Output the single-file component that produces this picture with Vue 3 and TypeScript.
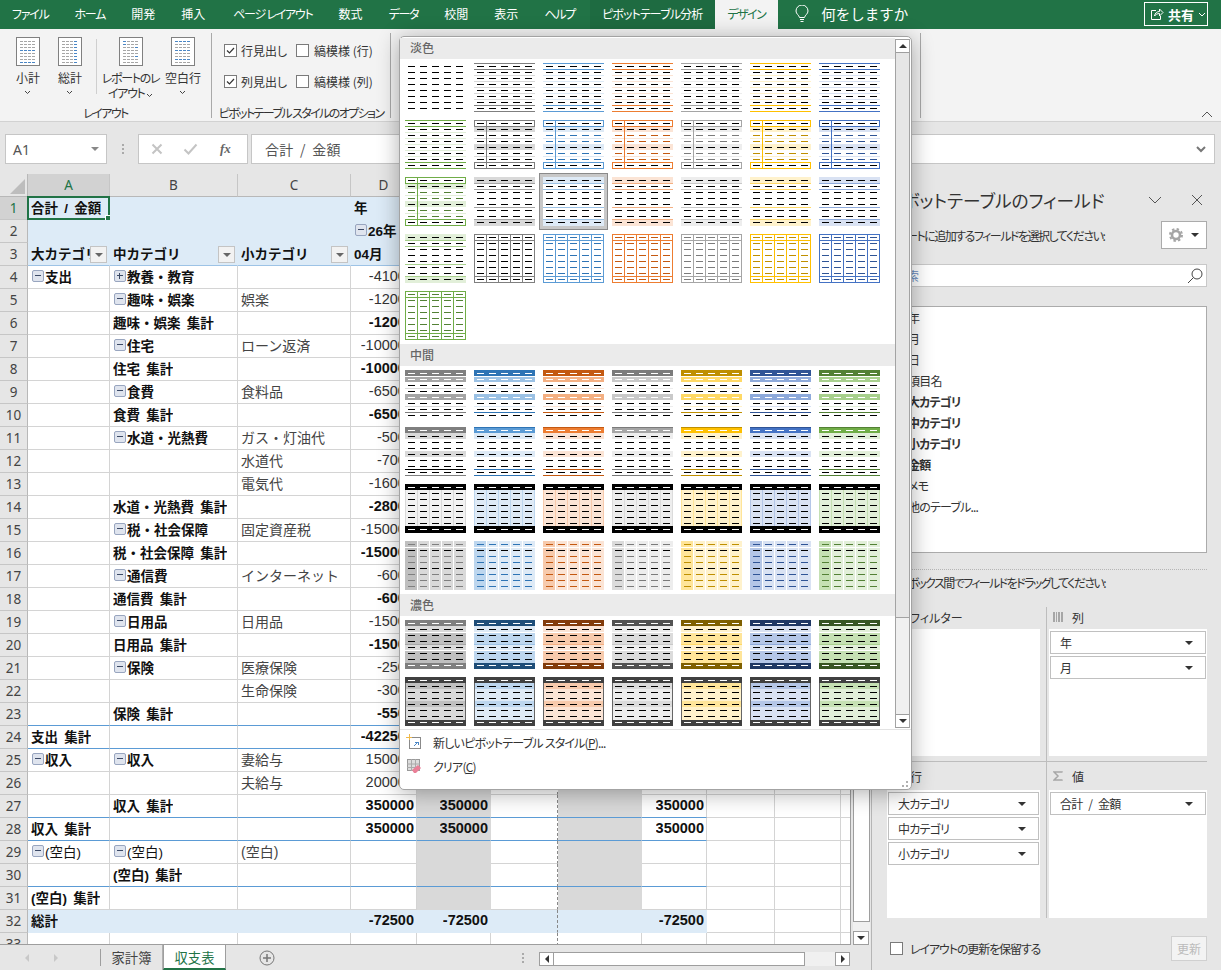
<script setup lang="ts">
interface Shape {
  x: number
  y: number
  w: number
  h: number
  c: string
}

interface Row {
  n: number
  a?: string
  b?: string
  c?: string
  d?: string
  e?: string
  h?: string
  exA?: string
  exB?: string
  bold?: boolean
  plain?: boolean
  head?: boolean
  total?: boolean
  blue?: boolean
  filters?: boolean
}

const tabs = [
  { label: 'ファイル', cls: 'kana' },
  { label: 'ホーム', cls: 'kana' },
  { label: '開発', cls: '' },
  { label: '挿入', cls: '' },
  { label: 'ページ レイアウト', cls: 'kana page-layout' },
  { label: '数式', cls: '' },
  { label: 'データ', cls: 'kana' },
  { label: '校閲', cls: '' },
  { label: '表示', cls: '' },
  { label: 'ヘルプ', cls: 'kana' },
  { label: 'ピボットテーブル分析', cls: 'analysis' },
  { label: 'デザイン', cls: 'active' },
]

const columns = ['A', 'B', 'C', 'D', 'E', 'F', 'G', 'H', 'I', 'J', '']

const rows: Row[] = [
  { n: 1, a: '合計 / 金額', d: '年', head: true, bold: true },
  { n: 2, d: '26年', head: true, bold: true },
  { n: 3, a: '大カテゴリ', b: '中カテゴリ', c: '小カテゴリ', d: '04月', head: true, bold: true, filters: true },
  { n: 4, a: '支出', exA: '-', b: '教養・教育', exB: '+', d: '-41000' },
  { n: 5, b: '趣味・娯楽', exB: '-', c: '娯楽', d: '-12000' },
  { n: 6, b: '趣味・娯楽 集計', d: '-12000', bold: true },
  { n: 7, b: '住宅', exB: '-', c: 'ローン返済', d: '-100000' },
  { n: 8, b: '住宅 集計', d: '-100000', bold: true },
  { n: 9, b: '食費', exB: '-', c: '食料品', d: '-65000' },
  { n: 10, b: '食費 集計', d: '-65000', bold: true },
  { n: 11, b: '水道・光熱費', exB: '-', c: 'ガス・灯油代', d: '-5000' },
  { n: 12, c: '水道代', d: '-7000' },
  { n: 13, c: '電気代', d: '-16000' },
  { n: 14, b: '水道・光熱費 集計', d: '-28000', bold: true },
  { n: 15, b: '税・社会保障', exB: '-', c: '固定資産税', d: '-150000' },
  { n: 16, b: '税・社会保障 集計', d: '-150000', bold: true },
  { n: 17, b: '通信費', exB: '-', c: 'インターネット', d: '-6000' },
  { n: 18, b: '通信費 集計', d: '-6000', bold: true },
  { n: 19, b: '日用品', exB: '-', c: '日用品', d: '-15000' },
  { n: 20, b: '日用品 集計', d: '-15000', bold: true },
  { n: 21, b: '保険', exB: '-', c: '医療保険', d: '-2500' },
  { n: 22, c: '生命保険', d: '-3000' },
  { n: 23, b: '保険 集計', d: '-5500', bold: true, blue: true },
  { n: 24, a: '支出 集計', d: '-422500', bold: true, blue: true },
  { n: 25, a: '収入', exA: '-', b: '収入', exB: '-', c: '妻給与', d: '150000' },
  { n: 26, c: '夫給与', d: '200000' },
  { n: 27, b: '収入 集計', d: '350000', e: '350000', h: '350000', bold: true, blue: true },
  { n: 28, a: '収入 集計', d: '350000', e: '350000', h: '350000', bold: true, blue: true },
  { n: 29, a: '(空白)', exA: '-', b: '(空白)', exB: '-', c: '(空白)', plain: true },
  { n: 30, b: '(空白) 集計', blue: true },
  { n: 31, a: '(空白) 集計' },
  { n: 32, a: '総計', d: '-72500', e: '-72500', h: '-72500', bold: true, total: true },
  { n: 33 },
]

function cellText(row: Row, col: string): string {
  if (col === 'A') return row.a ?? ''
  if (col === 'B') return row.b ?? ''
  if (col === 'C') return row.c ?? ''
  if (col === 'D') return row.d ?? ''
  if (col === 'E') return row.e ?? ''
  if (col === 'H') return row.h ?? ''
  return ''
}

function cellClass(row: Row, col: string) {
  const inPivot = 'ABCDEFGH'.includes(col) && col !== ''
  const isNum = 'DEH'.includes(col) && col !== '' && !row.head
  return {
    head: row.head && inPivot,
    'head-last': row.n === 3 && inPivot,
    total: row.total && inPivot,
    blue: row.blue && inPivot,
    num: isNum,
    strong: !(col === 'C' && !row.head) && !row.plain && (row.bold || col === 'A' || col === 'B'),
    sub: col === 'C' && !row.head,
    shaded: (col === 'E' || col === 'G') && row.n > 3 && row.n < 32,
    page: col === 'F',
  }
}

// テーブルスタイルのサムネイル
const base = ['#7f7f7f', '#5b9bd5', '#ed7d31', '#a5a5a5', '#ffc000', '#4472c4', '#70ad47']
const text = ['#000000', '#2e74b5', '#c45911', '#7b7b7b', '#bf8f00', '#2f5496', '#538135']
const deep = ['#7f7f7f', '#1f4e79', '#833c0b', '#525252', '#7f6000', '#1f3864', '#385623']
const tint = ['#d9d9d9', '#deeaf6', '#fbe4d5', '#ededed', '#fff2cc', '#d9e2f3', '#e2efd9']
const mid = ['#bfbfbf', '#bdd6ee', '#f7caac', '#dbdbdb', '#ffe599', '#b4c6e7', '#c5e0b3']
const strong = ['#a6a6a6', '#9cc2e5', '#f4b083', '#c9c9c9', '#ffd966', '#8eaadb', '#a8d08d']

const DASH_COLS = [3, 15, 27, 39, 51]
const DASH_ROWS = [3, 9, 15, 21, 27, 33, 39, 45]

function dashes(color: (r: number, c: number) => string): Shape[] {
  const out: Shape[] = []
  DASH_ROWS.forEach((y, r) => {
    DASH_COLS.forEach((x, c) => out.push({ x, y, w: 7, h: 1, c: color(r, c) }))
  })
  return out
}

function hline(y: number, c: string, h = 1): Shape {
  return { x: 0, y, w: 61, h, c }
}

function box(y: number, h: number, c: string): Shape[] {
  return [
    { x: 0, y, w: 61, h: 1, c },
    { x: 0, y: y + h - 1, w: 61, h: 1, c },
    { x: 0, y, w: 1, h, c },
    { x: 60, y, w: 1, h, c },
  ]
}

function vlines(c: string, y = 0, h = 49): Shape[] {
  return [12, 24, 36, 48].map((x) => ({ x, y, w: 1, h, c }))
}

const styles: Record<string, (t: number) => Shape[]> = {
  plain: () => dashes(() => '#000'),
  lined: (t) => [
    hline(0, base[t]),
    hline(6, base[t]),
    ...[12, 18, 24, 30, 36].map((y) => hline(y, tint[t])),
    hline(42, base[t]),
    hline(48, base[t]),
    ...dashes(() => '#000'),
  ],
  boxed: (t) => [
    hline(7, tint[t], 5),
    hline(24, tint[t], 6),
    hline(18, tint[t]),
    hline(36, tint[t]),
    ...box(0, 7, base[t]),
    ...box(42, 7, base[t]),
    { x: 12, y: 0, w: 1, h: 49, c: base[t] },
    ...dashes((r) => ([0, 1, 4, 7].includes(r) ? '#000' : text[t])),
  ],
  banded: (t) => [
    hline(0, tint[t], 6),
    hline(42, tint[t], 7),
    hline(6, strong[t]),
    hline(12, strong[t]),
    hline(30, strong[t]),
    hline(42, strong[t]),
    ...dashes(() => '#000'),
  ],
  grid: (t) => [
    ...box(0, 49, base[t]),
    hline(6, base[t]),
    hline(42, base[t]),
    ...vlines(base[t]),
    ...dashes(() => text[t]),
  ],
  medA: (t) => [
    hline(0, t === 0 ? '#7f7f7f' : text[t], 6),
    hline(7, strong[t], 5),
    hline(24, strong[t], 6),
    hline(18, tint[t]),
    hline(36, tint[t]),
    hline(42, text[t] === '#000000' ? '#7f7f7f' : text[t]),
    ...dashes((r) => ([0, 1, 4].includes(r) ? '#fff' : '#000')),
  ],
  medB: (t) => [
    hline(0, base[t], 6),
    hline(0, text[t] === '#000000' ? '#7f7f7f' : text[t]),
    hline(6, tint[t], 6),
    hline(24, tint[t], 6),
    hline(42, text[t]),
    hline(48, text[t] === '#000000' ? '#7f7f7f' : text[t]),
    ...dashes((r) => (r === 0 ? '#fff' : '#000')),
  ],
  medC: (t) => [
    hline(6, t === 0 ? '#f2f2f2' : tint[t], 36),
    ...vlines(t === 0 ? '#d9d9d9' : mid[t], 6, 36),
    { x: 0, y: 6, w: 1, h: 36, c: t === 0 ? '#d9d9d9' : mid[t] },
    { x: 60, y: 6, w: 1, h: 36, c: t === 0 ? '#d9d9d9' : mid[t] },
    hline(0, '#000', 6),
    hline(42, '#000', 7),
    ...dashes((r) => ([0, 7].includes(r) ? '#fff' : '#000')),
  ],
  medD: (t) => [
    hline(0, tint[t], 49),
    { x: 0, y: 0, w: 12, h: 49, c: mid[t] },
    ...vlines('#fff'),
    hline(6, '#fff'),
    ...dashes((r) => ([1, 4].includes(r) ? '#000' : t === 0 ? '#7f7f7f' : text[t])),
  ],
  darkA: (t) => [
    hline(0, t === 0 ? '#bfbfbf' : mid[t], 49),
    hline(6, tint[t], 6),
    hline(24, tint[t], 6),
    hline(24, strong[t]),
    hline(12, '#fff'),
    hline(30, '#fff'),
    hline(0, deep[t], 6),
    hline(43, deep[t], 6),
    ...dashes((r) => ([0, 7].includes(r) ? '#fff' : '#000')),
  ],
  darkB: (t) => [
    hline(0, t === 0 ? '#d9d9d9' : tint[t], 49),
    hline(6, mid[t], 6),
    hline(24, mid[t], 6),
    ...box(0, 49, '#666'),
    hline(0, '#404040', 6),
    hline(43, '#404040', 6),
    ...dashes((r) => ([0, 7].includes(r) ? '#fff' : '#000')),
  ],
}

function series(kind: string): Shape[][] {
  return base.map((_, t) => styles[kind](t))
}

const sections = [
  {
    title: '淡色',
    items: [[styles.plain(0)], series('lined'), series('boxed'), series('banded'), series('grid')].flat(),
  },
  {
    title: '中間',
    items: [series('medA'), series('medB'), series('medC'), series('medD')].flat(),
  },
  {
    title: '濃色',
    items: [series('darkA'), series('darkB')].flat(),
  },
]

const selectedSwatch = 16

// リボンのアイコン (グレーの罫線 + 青い強調)
const GRAY = '#a6a6a6'
const BLUE = '#4a86c5'

function ribbonIcon(blue: (r: number, c: number) => boolean): Shape[] {
  const out: Shape[] = []
  for (let r = 0; r < 8; r++) {
    for (let c = 0; c < 4; c++) {
      out.push({ x: 4 + c * 4, y: 4 + r * 3, w: 3, h: 1, c: blue(r, c) ? BLUE : GRAY })
    }
  }
  return out
}

const ribbonButtons = [
  { lines: ['小計'], icon: ribbonIcon((r) => r === 3 || r === 7), cls: 'b-sub' },
  { lines: ['総計'], icon: ribbonIcon((_, c) => c === 3), cls: 'b-total' },
  { lines: ['レポートのレ', 'イアウト'], icon: ribbonIcon((r, c) => (r < 2 && c === 0) || (c === 3 && r % 3 === 2)), cls: 'b-report' },
  { lines: ['空白行'], icon: ribbonIcon((r) => r === 0 || r === 3 || r === 6), cls: 'b-blank' },
]

const fieldNames = [
  { name: '年', bold: false },
  { name: '月', bold: false },
  { name: '日', bold: false },
  { name: '項目名', bold: false },
  { name: '大カテゴリ', bold: true },
  { name: '中カテゴリ', bold: true },
  { name: '小カテゴリ', bold: true },
  { name: '金額', bold: true },
  { name: 'メモ', bold: false },
  { name: '他のテーブル...', bold: false, link: true },
]

const areas = [
  { title: 'フィルター', icon: 'filter', items: [] as string[] },
  { title: '列', icon: 'cols', items: ['年', '月'] },
  { title: '行', icon: 'rows', items: ['大カテゴリ', '中カテゴリ', '小カテゴリ'] },
  { title: '値', icon: 'sum', items: ['合計 / 金額'] },
]
</script>

<template>
  <div class="excel">
    <header class="tabbar">
      <div v-for="tab in tabs" :key="tab.label" class="tab" :class="tab.cls">{{ tab.label }}</div>
      <div class="tell">
        <svg width="14" height="18" viewBox="0 0 14 18" fill="none" stroke="#fff">
          <path d="M4.5 12.5C4 10 1 9 1 6a6 6 0 0 1 12 0c0 3-3 4-3.500 6.500z" />
          <path d="M5 14.500h4M5.500 16.500h3" />
        </svg>
        <span>何をしますか</span>
      </div>
      <div class="share">
        <svg width="14" height="14" viewBox="0 0 14 14" fill="none" stroke="#fff">
          <path d="M6 3.500H1.500v9h9V9M4.500 9c.5-3 2.500-4.500 5-4.500V2l3.500 3.500L9.500 9V6.500C7.500 6.500 5.500 7.500 4.500 9z" />
        </svg>
        <b>共有</b>
        <svg width="8" height="5" viewBox="0 0 8 5" fill="none" stroke="#fff"><path d="M1 1l3 3 3-3" /></svg>
      </div>
    </header>

    <section class="ribbon">
      <div class="rgroup g-layout">
        <div class="rbody">
          <div v-for="btn in ribbonButtons" :key="btn.cls" class="rbtn" :class="btn.cls">
            <svg width="24" height="29" viewBox="0 0 24 29" class="rbtn-icon" shape-rendering="crispEdges">
              <rect x="0.500" y="0.500" width="23" height="28" fill="#fff" stroke="#808080" />
              <rect v-for="(s, i) in btn.icon" :key="i" :x="s.x" :y="s.y" :width="s.w" :height="s.h" :fill="s.c" />
            </svg>
            <div class="rbtn-text">
              <span v-for="(line, i) in btn.lines" :key="line" class="rbtn-line">
                {{ line }}
                <svg v-if="btn.lines.length > 1 && i === 1" width="7" height="5" viewBox="0 0 7 5" fill="none" stroke="#444"><path d="M1 1l2.500 2.500L6 1" /></svg>
              </span>
              <svg v-if="btn.lines.length === 1" width="7" height="5" viewBox="0 0 7 5" fill="none" stroke="#444" class="rbtn-chev"><path d="M1 1l2.500 2.500L6 1" /></svg>
            </div>
          </div>
        </div>
        <div class="rlabel">レイアウト</div>
      </div>
      <div class="rgroup g-options">
        <div class="checks">
          <label class="check"><span class="box on"><svg width="11" height="11" viewBox="0 0 11 11" fill="none" stroke="#333" stroke-width="1.200"><path d="M2 5.500l2.500 2.500L9 3" /></svg></span>行見出し</label>
          <label class="check"><span class="box"></span>縞模様 (行)</label>
          <label class="check"><span class="box on"><svg width="11" height="11" viewBox="0 0 11 11" fill="none" stroke="#333" stroke-width="1.200"><path d="M2 5.500l2.500 2.500L9 3" /></svg></span>列見出し</label>
          <label class="check"><span class="box"></span>縞模様 (列)</label>
        </div>
        <div class="rlabel">ピボットテーブル スタイルのオプション</div>
      </div>
      <div class="rgroup g-styles"></div>
      <svg class="collapse" width="12" height="7" viewBox="0 0 12 7" fill="none" stroke="#555"><path d="M1 6l5-5 5 5" /></svg>
    </section>

    <section class="formula">
      <div class="namebox">
        <span>A1</span>
        <i class="tri gray"></i>
      </div>
      <div class="grip"></div>
      <div class="fxbox">
        <svg width="12" height="12" viewBox="0 0 12 12" fill="none" stroke="#c4c4c4" stroke-width="2"><path d="M1.500 1.500l9 9M10.500 1.500l-9 9" /></svg>
        <svg width="15" height="12" viewBox="0 0 15 12" fill="none" stroke="#c4c4c4" stroke-width="2"><path d="M1.500 6.500l4 4 8-9" /></svg>
        <span class="fx">fx</span>
      </div>
      <div class="fbar">
        <span>合計 / 金額</span>
        <svg width="10" height="7" viewBox="0 0 10 7" fill="none" stroke="#777" stroke-width="2"><path d="M1 1l4 4 4-4" /></svg>
      </div>
    </section>

    <main class="workspace">
      <div class="book">
        <div class="book-top">
          <div class="sheet">
            <div class="cols col-head">
              <div class="corner"><i></i></div>
              <div v-for="col in columns" :key="col" class="chead" :class="{ sel: col === 'A' }">{{ col }}</div>
            </div>
            <div v-for="row in rows" :key="row.n" class="cols sheet-row">
              <div class="rhead" :class="{ sel: row.n === 1 }">{{ row.n }}</div>
              <div v-for="col in columns" :key="col" class="cell" :class="cellClass(row, col)">
                <i v-if="col === 'A' && row.exA" class="ex" :class="{ plus: row.exA === '+' }"></i>
                <i v-if="col === 'B' && row.exB" class="ex" :class="{ plus: row.exB === '+' }"></i>
                <i v-if="col === 'D' && row.n === 2" class="ex"></i>
                <span class="val">{{ cellText(row, col) }}</span>
                <span v-if="row.filters && 'ABC'.includes(col) && col" class="filter"><i class="tri"></i></span>
                <span v-if="row.n === 1 && col === 'A'" class="cursor"><em></em></span>
              </div>
            </div>
          </div>
          <div class="vscroll">
            <div class="sb-btn"><i class="tri up"></i></div>
            <div class="vthumb"></div>
            <div class="sb-btn"><i class="tri"></i></div>
          </div>
        </div>
        <div class="sheetbar">
          <div class="nav">
            <i class="tri left pale"></i>
            <i class="tri right pale"></i>
          </div>
          <div class="stab">家計簿</div>
          <div class="stab current">収支表</div>
          <svg class="addsheet" width="16" height="16" viewBox="0 0 16 16" fill="none" stroke="#777">
            <circle cx="8" cy="8" r="7" />
            <path d="M8 4v8M4 8h8" stroke-width="1.500" />
          </svg>
          <div class="grip sgrip"></div>
          <div class="hscroll">
            <div class="sb-btn"><i class="tri left"></i></div>
            <div class="hthumb"></div>
            <div class="sb-btn"><i class="tri right"></i></div>
          </div>
        </div>
      </div>

      <aside class="fields">
        <div class="f-title">
          <span>ピボットテーブルのフィールド</span>
          <svg width="14" height="8" viewBox="0 0 14 8" fill="none" stroke="#555"><path d="M1 1l6 6 6-6" /></svg>
          <svg width="12" height="12" viewBox="0 0 12 12" fill="none" stroke="#555"><path d="M1 1l10 10M11 1L1 11" /></svg>
        </div>
        <div class="f-sub">
          <span>レポートに追加するフィールドを選択してください:</span>
          <div class="gearbtn">
            <svg width="14" height="14" viewBox="0 0 14 14">
              <circle cx="7" cy="7" r="4" fill="none" stroke="#a5a5a5" stroke-width="2.600" />
              <circle cx="7" cy="7" r="6" fill="none" stroke="#a5a5a5" stroke-width="2" stroke-dasharray="2.400 2.300" />
            </svg>
            <i class="tri"></i>
          </div>
        </div>
        <div class="f-search">
          <span>検索</span>
          <svg width="16" height="16" viewBox="0 0 16 16" fill="none" stroke="#444"><circle cx="10" cy="6" r="5" /><path d="M6.500 9.500L1 15" /></svg>
        </div>
        <div class="f-list">
          <div v-for="f in fieldNames" :key="f.name" class="f-item" :class="{ bold: f.bold }">
            <span class="box"></span>{{ f.name }}
          </div>
        </div>
        <div class="f-dots"></div>
        <div class="f-drag">次のボックス間でフィールドをドラッグしてください:</div>
        <div class="f-areas">
          <div v-for="area in areas" :key="area.title" class="area" :class="'a-' + area.icon">
            <div class="a-title">
              <svg v-if="area.icon === 'cols'" width="10" height="10" viewBox="0 0 10 10" fill="#a6a6a6" shape-rendering="crispEdges">
                <rect width="2" height="10" /><rect x="3" width="1" height="10" /><rect x="5" width="2" height="10" /><rect x="8" width="2" height="10" />
              </svg>
              <svg v-else-if="area.icon === 'rows'" width="10" height="10" viewBox="0 0 10 10" fill="#a6a6a6" shape-rendering="crispEdges">
                <rect width="10" height="2" /><rect y="4" width="10" height="2" /><rect y="8" width="10" height="2" />
              </svg>
              <svg v-else-if="area.icon === 'sum'" width="10" height="10" viewBox="0 0 10 10" fill="none" stroke="#a6a6a6" stroke-width="1.500"><path d="M9 1.500V1H1l4 4-4 4h8v-.5" /></svg>
              <svg v-else width="10" height="10" viewBox="0 0 10 10" fill="#a6a6a6"><path d="M0 0h10L6 5v5L4 9V5z" /></svg>
              <span>{{ area.title }}</span>
            </div>
            <div class="a-box">
              <div v-for="it in area.items" :key="it" class="a-item">
                <span>{{ it }}</span>
                <i class="tri"></i>
              </div>
            </div>
          </div>
        </div>
        <div class="f-foot">
          <label class="hold"><span class="box"></span>レイアウトの更新を保留する</label>
          <div class="update">更新</div>
        </div>
      </aside>
    </main>

    <div class="gallery">
      <div class="g-main">
        <div class="g-list">
          <template v-for="(sec, s) in sections" :key="sec.title">
            <div class="g-head" :class="{ first: s === 0 }">{{ sec.title }}</div>
            <div class="g-grid">
              <div v-for="(shapes, i) in sec.items" :key="i" class="swatch" :class="{ selected: s === 0 && i === selectedSwatch }">
                <svg width="61" height="49" viewBox="0 0 61 49" shape-rendering="crispEdges">
                  <rect v-for="(r, k) in shapes" :key="k" :x="r.x" :y="r.y" :width="r.w" :height="r.h" :fill="r.c" />
                </svg>
              </div>
            </div>
          </template>
        </div>
        <div class="g-scroll">
          <div class="sb-btn"><i class="tri up"></i></div>
          <div class="g-thumb"></div>
          <div class="sb-btn"><i class="tri"></i></div>
        </div>
      </div>
      <div class="g-menu">
        <div class="g-item">
          <svg width="16" height="16" viewBox="0 0 16 16" fill="none" shape-rendering="crispEdges">
            <rect x="3.500" y="3.500" width="11" height="11" fill="#fff" stroke="#8a8a8a" />
            <path d="M9 8h3v3M12 8l-4 4" stroke="#4a86c5" />
            <path d="M3 0v6M0 3h6" stroke="#f0b94a" />
          </svg>
          <span>新しいピボットテーブル スタイル(<u>P</u>)...</span>
        </div>
        <div class="g-item">
          <svg width="16" height="16" viewBox="0 0 16 16" fill="none">
            <rect x="1.500" y="1.500" width="12" height="11" fill="#ddd" stroke="#999" />
            <path d="M1 6h13M1 9.500h13M5.500 1v12M9.500 1v12" stroke="#aaa" />
            <path d="M6 12l6-5 3 3-5 5H8z" fill="#ea7f97" />
          </svg>
          <span>クリア(<u>C</u>)</span>
        </div>
        <div class="g-resize"><i></i><i></i><i></i></div>
      </div>
    </div>
  </div>
</template>

<style>
html,
body {
  margin: 0;
  background: #e6e6e6;
  overflow: hidden;
}
</style>

<style scoped>
.excel {
  position: relative;
  width: 1221px;
  height: 970px;
  overflow: hidden;
  display: flex;
  flex-direction: column;
  font-family: "Noto Sans CJK JP", "Noto Sans", sans-serif;
  font-size: 12px;
  color: #333;
  font-feature-settings: "palt";
}

.tri {
  display: inline-block;
  width: 0;
  height: 0;
  border-left: 4px solid transparent;
  border-right: 4px solid transparent;
  border-top: 4px solid #333;
}
.tri.up {
  border-top: 0;
  border-bottom: 4px solid #333;
}
.tri.left,
.tri.right {
  border-top: 4px solid transparent;
  border-bottom: 4px solid transparent;
}
.tri.left {
  border-left: 0;
  border-right: 4px solid #333;
}
.tri.right {
  border-right: 0;
  border-left: 4px solid #333;
}
.tri.pale.left {
  border-right-color: #c8c8c8;
}
.tri.pale.right {
  border-left-color: #c8c8c8;
}
.tri.gray {
  border-top-color: #888;
}

/* タブ */
.tabbar {
  flex: none;
  height: 29px;
  display: flex;
  align-items: stretch;
  background: #217346;
  color: #fff;
}
.tab {
  padding: 0 13px;
  line-height: 27px;
  white-space: nowrap;
}
.tab.kana {
  letter-spacing: -1.250px;
}
.tab.page-layout {
  margin-left: 2px;
}
.tab:first-child {
  padding-left: 12px;
}
.tab.analysis {
  margin-left: 2px;
  padding: 0 13px 0 12px;
  background: #1e6b41;
  letter-spacing: -0.900px;
}
.tab.active {
  padding: 0 13px 0 12px;
  background: #f3f3f3;
  color: #217346;
  letter-spacing: -1.500px;
}
.tell {
  display: flex;
  align-items: center;
  gap: 12px;
  margin-left: 17px;
  height: 27px;
  font-size: 14.500px;
  font-feature-settings: normal;
}
.share {
  display: flex;
  align-items: center;
  gap: 4px;
  box-sizing: border-box;
  width: 64px;
  height: 24px;
  margin: 2px 0 0 auto;
  margin-right: 13px;
  padding-left: 5px;
  border: 1px solid #fff;
  font-size: 13px;
}

/* リボン */
.ribbon {
  position: relative;
  flex: none;
  height: 93px;
  display: flex;
  background: #f3f3f3;
  border-bottom: 1px solid #d2d2d2;
  box-sizing: border-box;
}
.rgroup {
  display: flex;
  flex-direction: column;
  height: 85px;
  margin-top: 4px;
  border-right: 1px solid #a9a9a9;
  box-sizing: border-box;
}
.g-layout {
  width: 212px;
}
.g-options {
  width: 179px;
}
.g-styles {
  width: 530px;
}
.rbody {
  flex: 1;
  display: flex;
  align-items: flex-start;
  padding-top: 4px;
  min-height: 0;
}
.rbtn {
  display: flex;
  flex-direction: column;
  align-items: center;
  flex: none;
}
.rbtn-icon {
  flex: none;
}
.rbtn-text {
  flex: none;
  display: flex;
  flex-direction: column;
  align-items: center;
  margin-top: 4px;
  line-height: 15px;
}
.rbtn-line {
  white-space: nowrap;
}
.rbtn-chev {
  margin-top: 5px;
}
.b-sub {
  width: 56px;
}
.b-total {
  width: 28px;
  margin-right: 12px;
}
.b-report {
  box-sizing: border-box;
  width: 68px;
  height: 55px;
  margin-top: 2px;
  border-left: 1px solid #cfcfcf;
  letter-spacing: -1.300px;
}
.b-report .rbtn-icon {
  margin-top: -2px;
}
.b-blank {
  width: 38px;
}
.rlabel {
  flex: none;
  text-align: center;
  height: 18px;
  line-height: 16px;
  margin-bottom: -5px;
  white-space: nowrap;
  letter-spacing: -1.600px;
}
.checks {
  flex: 1;
  display: grid;
  grid-template-columns: 72px auto;
  grid-template-rows: 31px 31px;
  padding: 2px 0 0 12px;
  align-content: start;
}
.check {
  display: flex;
  align-items: center;
  gap: 4px;
  font-size: 12px;
  white-space: nowrap;
}
.check:nth-child(even) {
  gap: 5px;
}
.box {
  display: inline-flex;
  flex: none;
  box-sizing: border-box;
  align-items: center;
  justify-content: center;
  width: 13px;
  height: 13px;
  border: 1px solid #7a7a7a;
  background: #fff;
}
.collapse {
  position: absolute;
  right: 8px;
  bottom: 3px;
}

/* 数式バー */
.formula {
  flex: none;
  height: 52px;
  box-sizing: border-box;
  padding: 12px 6px 0 5px;
  display: flex;
  align-items: flex-start;
  background: #e6e6e6;
}
.namebox,
.fxbox,
.fbar {
  display: flex;
  align-items: center;
  box-sizing: border-box;
  height: 30px;
  background: #fff;
  border: 1px solid #c6c6c6;
}
.namebox {
  width: 102px;
  padding: 0 7px;
  justify-content: space-between;
  font-family: "Noto Sans", sans-serif;
  font-size: 14px;
  color: #555;
}
.grip {
  width: 2px;
  height: 10px;
  margin: 10px 14px 0 15px;
  border-left: 2px dotted #aaa;
  box-sizing: border-box;
}
.fxbox {
  width: 110px;
  padding: 0 12px;
  gap: 20px;
}
.fx {
  margin-left: 2px;
  font-family: "Liberation Serif", serif;
  font-style: italic;
  font-weight: 700;
  font-size: 13px;
  color: #666;
}
.fbar {
  flex: 1;
  margin-left: 3px;
  padding: 0 8px 0 13px;
  justify-content: space-between;
  font-size: 14px;
  letter-spacing: 0.300px;
  word-spacing: 3px;
  font-feature-settings: normal;
  color: #555;
}

/* シート */
.workspace {
  flex: 1;
  min-height: 0;
  display: flex;
}
.book {
  flex: none;
  width: 871px;
  display: flex;
  flex-direction: column;
}
.book-top {
  flex: 1;
  min-height: 0;
  display: flex;
}
.sheet {
  flex: none;
  box-sizing: border-box;
  width: 851px;
  overflow: hidden;
  border-right: 1px solid #9e9e9e;
  border-bottom: 1px solid #9e9e9e;
  background: #fff;
  font-family: "Liberation Sans", "Noto Sans CJK JP", sans-serif;
  font-size: 13.500px;
  font-feature-settings: normal;
  word-spacing: 2.500px;
  color: #111;
}
.cols {
  display: grid;
  grid-template-columns: 28px 82px 128px 113px 66px 74px 67px 84px 65px 68px 66px 10px;
  height: 23px;
}
.corner {
  position: relative;
  background: #e6e6e6;
  border-right: 1px solid #b8b8b8;
  border-bottom: 1px solid #b8b8b8;
}
.corner i {
  position: absolute;
  right: 2px;
  bottom: 2px;
  border-left: 15px solid transparent;
  border-bottom: 15px solid #bdbdbd;
}
.chead,
.rhead {
  box-sizing: border-box;
  display: flex;
  align-items: center;
  justify-content: center;
  background: #e6e6e6;
  font-family: "Noto Sans", sans-serif;
  font-size: 13.500px;
  color: #444;
}
.chead {
  border-right: 1px solid #c6c6c6;
  border-bottom: 1px solid #b8b8b8;
}
.rhead {
  border-right: 1px solid #b8b8b8;
  border-bottom: 1px solid #c6c6c6;
}
.chead.sel,
.rhead.sel {
  background: #d2d2d2;
  color: #217346;
}
.cell {
  position: relative;
  box-sizing: border-box;
  display: flex;
  align-items: center;
  min-width: 0;
  padding: 0 3px 2px;
  white-space: nowrap;
  overflow: visible;
  border-right: 1px solid #d4d4d4;
  border-bottom: 1px solid #d4d4d4;
}
.val {
  overflow: hidden;
}
.cell.strong {
  font-weight: 700;
}
.cell.sub {
  font-size: 14px;
  color: #444;
}
.cell.num {
  justify-content: flex-end;
  padding-right: 2px;
  font-size: 14.500px;
  color: #333;
}
.cell.num.strong {
  color: #111;
}
.cell.shaded {
  background: #d9d9d9;
  border-right-color: #d9d9d9;
  border-bottom-color: #d9d9d9;
}
.cell.head {
  background: #ddebf7;
  border-color: #ddebf7;
}
.cell.head-last {
  border-bottom-color: #9dc3e6;
}
.cell.total {
  background: #ddebf7;
  border-color: #ddebf7;
}
.cell.blue {
  border-bottom-color: #5b9bd5;
}
.sheet-row:nth-child(32) .cell.blue {
  border-bottom-color: #9dc3e6;
}
.cell.page {
  border-right: 1px dashed #888;
}
.ex {
  position: relative;
  flex: none;
  box-sizing: border-box;
  width: 12px;
  height: 12px;
  margin: 0 1px;
  border: 1px solid #98a5bf;
  border-radius: 2px;
  background: #dfe4ee;
}
.ex::before {
  content: "";
  position: absolute;
  left: 2px;
  right: 2px;
  top: 4px;
  height: 1px;
  background: #3c4a66;
}
.ex.plus::after {
  content: "";
  position: absolute;
  top: 2px;
  bottom: 2px;
  left: 4px;
  width: 1px;
  background: #3c4a66;
}
.filter {
  position: absolute;
  right: 2px;
  bottom: 2px;
  box-sizing: border-box;
  width: 17px;
  height: 17px;
  display: flex;
  align-items: center;
  justify-content: center;
  background: #f2f2f2;
  border: 1px solid #c4c4c4;
}
.filter .tri {
  border-top-color: #666;
}
.cursor {
  position: absolute;
  left: -1px;
  top: -1px;
  width: 83px;
  height: 24px;
  box-sizing: border-box;
  border: 2px solid #217346;
}
.cursor em {
  position: absolute;
  right: -4px;
  bottom: -4px;
  width: 5px;
  height: 5px;
  background: #217346;
  border: 1px solid #fff;
}
.vscroll {
  flex: none;
  box-sizing: border-box;
  width: 17px;
  margin-left: 2px;
  display: flex;
  flex-direction: column;
  background: #f0f0f0;
}
.vthumb {
  height: 733px;
  margin-top: 1px;
  box-sizing: border-box;
  background: #fff;
  border: 1px solid #9e9e9e;
}
.vscroll .sb-btn:last-child {
  margin-top: auto;
}
.sb-btn {
  flex: none;
  display: flex;
  align-items: center;
  justify-content: center;
  box-sizing: border-box;
  width: 15px;
  height: 14px;
  background: #fff;
  border: 1px solid #9e9e9e;
}
.vscroll .sb-btn {
  width: 16px;
}
.sheetbar {
  flex: none;
  height: 25px;
  display: flex;
  align-items: stretch;
  background: #e6e6e6;
  border-right: 0;
}
.nav {
  display: flex;
  align-items: center;
  gap: 25px;
  width: 101px;
  padding-left: 25px;
  box-sizing: border-box;
  border-right: 1px solid #9e9e9e;
  margin: 4px 0 4px;
}
.stab {
  box-sizing: border-box;
  width: 62px;
  margin-top: 0;
  text-align: center;
  line-height: 26px;
  font-size: 13.300px;
  font-feature-settings: normal;
  color: #444;
  border-right: 1px solid #b0b0b0;
}
.stab.current {
  width: 63px;
  background: #fff;
  color: #217346;
  border-right: 1px solid #9e9e9e;
  border-left: 1px solid #9e9e9e;
  border-bottom: 2px solid #217346;
}
.addsheet {
  margin: 5px 0 0 33px;
}
.sgrip {
  margin: 8px 15px 0 auto;
}
.hscroll {
  flex: none;
  width: 311px;
  height: 14px;
  margin: 7px 21px 0 0;
  display: flex;
  background: #f0f0f0;
}
.hthumb {
  width: 252px;
  box-sizing: border-box;
  margin-left: -1px;
  background: #fff;
  border: 1px solid #9e9e9e;
}
.hscroll .sb-btn:last-child {
  margin-left: auto;
}

/* フィールド一覧 */
.fields {
  flex: 1;
  box-sizing: border-box;
  padding: 0 14px 0 15px;
  background: #e6e6e6;
  border-left: 1px solid #b5b5b5;
  display: flex;
  flex-direction: column;
  min-width: 0;
}
.f-title {
  display: flex;
  align-items: center;
  height: 26px;
  margin-top: 13px;
  font-size: 17.700px;
  white-space: nowrap;
}
.f-title span {
  margin-right: auto;
  margin-left: -1px;
}
.f-title svg:last-child {
  margin: 0 4px 0 29px;
}
.f-sub {
  display: flex;
  align-items: center;
  justify-content: space-between;
  height: 28px;
  margin-top: 8px;
  white-space: nowrap;
  letter-spacing: -1.500px;
}
.gearbtn {
  box-sizing: border-box;
  width: 46px;
  height: 28px;
  display: flex;
  align-items: center;
  justify-content: center;
  gap: 8px;
  background: #fff;
  border: 1px solid #ababab;
}
.f-search {
  box-sizing: border-box;
  height: 23px;
  margin-top: 15px;
  padding: 0 3px 0 7px;
  display: flex;
  align-items: center;
  justify-content: space-between;
  background: #fff;
  border: 1px solid #c8c8c8;
  color: #6a8cc0;
}
.f-list {
  box-sizing: border-box;
  height: 247px;
  margin-top: 19px;
  background: #fff;
  border: 1px solid #ababab;
}
.f-item {
  display: flex;
  align-items: center;
  gap: 4px;
  height: 21px;
  padding-left: 3px;
  white-space: nowrap;
  letter-spacing: -0.800px;
}
.f-item.bold {
  font-weight: 700;
}
.f-dots {
  margin-top: 16px;
  border-top: 1px dotted #b5b5b5;
}
.f-drag {
  height: 18px;
  margin-top: 4px;
  line-height: 18px;
  white-space: nowrap;
  letter-spacing: -1.600px;
}
.f-areas {
  display: grid;
  grid-template-columns: 159px 161px;
  grid-template-rows: 155px 156px;
  margin-top: 15px;
}
.area {
  display: flex;
  flex-direction: column;
  box-sizing: border-box;
}
.a-filter,
.a-rows {
  padding-right: 6px;
}
.a-cols,
.a-sum {
  border-left: 1px solid #bdbdbd;
  padding-left: 2px;
}
.a-filter,
.a-cols {
  border-bottom: 1px solid #bdbdbd;
  padding-bottom: 5px;
}
.a-title {
  flex: none;
  display: flex;
  align-items: center;
  gap: 9px;
  height: 20px;
  padding-left: 4px;
  margin-bottom: 2px;
}
.a-rows .a-title,
.a-sum .a-title {
  height: 28px;
  margin-bottom: 0;
}
.a-box {
  flex: 1;
  display: flex;
  flex-direction: column;
  gap: 2px;
  padding: 2px 1px;
  background: #fff;
}
.a-item {
  display: flex;
  align-items: center;
  justify-content: space-between;
  box-sizing: border-box;
  height: 23px;
  padding: 0 12px 0 9px;
  border: 1px solid #c0c0c0;
  background: #fff;
  letter-spacing: -0.800px;
  word-spacing: 4px;
}
.f-foot {
  display: flex;
  align-items: center;
  justify-content: space-between;
  margin-top: 18px;
}
.hold {
  display: flex;
  align-items: center;
  gap: 7px;
  margin-left: 3px;
  letter-spacing: -1.100px;
}
.update {
  box-sizing: border-box;
  width: 36px;
  height: 25px;
  line-height: 23px;
  text-align: center;
  background: #f3f3f3;
  border: 1px solid #d0d0d0;
  color: #bbb;
}

/* スタイルギャラリー */
.gallery {
  position: absolute;
  left: 399px;
  top: 36px;
  box-sizing: border-box;
  width: 513px;
  height: 754px;
  padding-top: 1px;
  display: flex;
  flex-direction: column;
  background: #fff;
  border: 1px solid #a3a3a3;
  border-radius: 5px;
  box-shadow: 0 3px 22px rgba(0, 0, 0, 0.32);
}
.g-main {
  flex: none;
  height: 691px;
  display: flex;
  border-bottom: 1px solid #e3e3e3;
}
.g-list {
  width: 495px;
  overflow: hidden;
}
.g-head {
  height: 22px;
  padding-left: 10px;
  background: #ebebeb;
  line-height: 21px;
  color: #666;
  font-weight: 500;
  font-feature-settings: normal;
}
.g-head.first {
  height: 21px;
  line-height: 19px;
}
.g-grid {
  display: grid;
  grid-template-columns: repeat(7, 61px);
  gap: 8px;
  padding: 4px 0 4px 5px;
}
.swatch {
  height: 49px;
}
.swatch svg {
  display: block;
}
.swatch.selected {
  box-shadow: 0 0 0 3px #c8c8c8, 0 0 0 4px #8a8a8a;
}
.g-scroll {
  flex: none;
  width: 15px;
  box-sizing: border-box;
  margin-top: 1px;
  display: flex;
  flex-direction: column;
  background: #f0f0f0;
  border-right: 1px solid #a3a3a3;
  border-left: 1px solid #a3a3a3;
  height: 689px;
}
.g-scroll .sb-btn {
  width: 100%;
  border-left: 0;
  border-right: 0;
}
.g-thumb {
  height: 565px;
  box-sizing: border-box;
  background: #e6e6e6;
  border-bottom: 1px solid #a3a3a3;
}
.g-scroll .sb-btn:last-child {
  margin-top: auto;
}
.g-menu {
  position: relative;
  flex: 1;
}
.g-item {
  display: flex;
  align-items: center;
  gap: 11px;
  height: 24px;
  padding-left: 6px;
  white-space: nowrap;
  letter-spacing: -0.800px;
}
.g-resize {
  position: absolute;
  right: 3px;
  bottom: 2px;
  display: grid;
  grid-template-columns: repeat(2, 2px);
  gap: 2px;
}
.g-resize i {
  width: 2px;
  height: 2px;
  background: #b0b0b0;
}
.g-resize i:first-child {
  grid-column: 2;
}
</style>
